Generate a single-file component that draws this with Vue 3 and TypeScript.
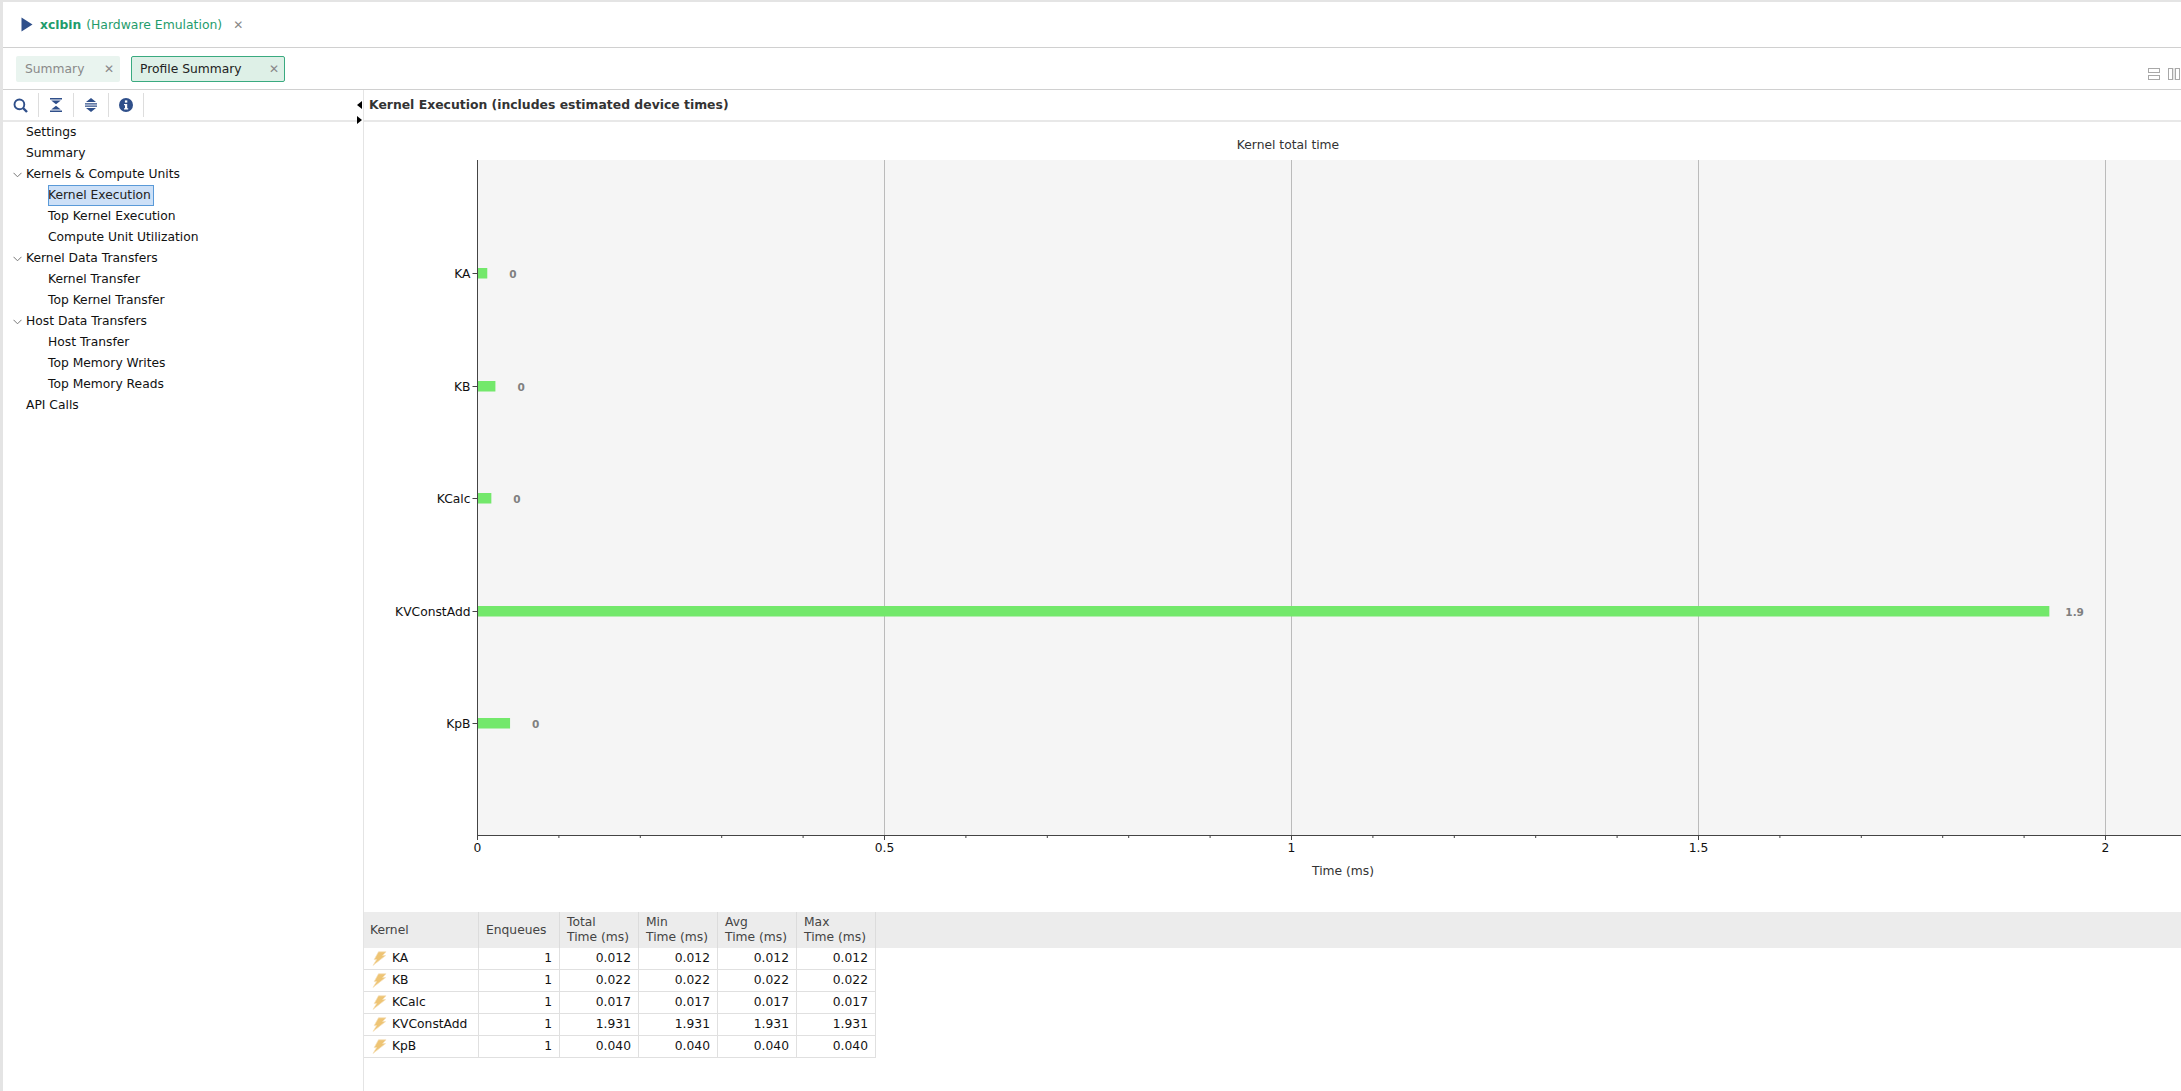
<script setup lang="ts">
interface TreeItem {
  label: string
  level: number
  open?: boolean
  selected?: boolean
}

interface KernelRow {
  name: string
  enqueues: number
  time: number
}

const tree: TreeItem[] = [
  { label: 'Settings', level: 0 },
  { label: 'Summary', level: 0 },
  { label: 'Kernels & Compute Units', level: 0, open: true },
  { label: 'Kernel Execution', level: 1, selected: true },
  { label: 'Top Kernel Execution', level: 1 },
  { label: 'Compute Unit Utilization', level: 1 },
  { label: 'Kernel Data Transfers', level: 0, open: true },
  { label: 'Kernel Transfer', level: 1 },
  { label: 'Top Kernel Transfer', level: 1 },
  { label: 'Host Data Transfers', level: 0, open: true },
  { label: 'Host Transfer', level: 1 },
  { label: 'Top Memory Writes', level: 1 },
  { label: 'Top Memory Reads', level: 1 },
  { label: 'API Calls', level: 0 },
]

const kernels: KernelRow[] = [
  { name: 'KA', enqueues: 1, time: 0.012 },
  { name: 'KB', enqueues: 1, time: 0.022 },
  { name: 'KCalc', enqueues: 1, time: 0.017 },
  { name: 'KVConstAdd', enqueues: 1, time: 1.931 },
  { name: 'KpB', enqueues: 1, time: 0.04 },
]

// chart geometry, svg origin is the left edge of the right pane
const axisX = 113.5
const pxPerMs = 814
const plotTop = 38
const plotBottom = 713
const rowStep = 112.5

const majors = [0, 0.5, 1, 1.5, 2]
const minors = Array.from({ length: 25 }, (_, i) => i * 0.1).filter((v) => Math.round(v * 10) % 5 !== 0)

function tickX(ms: number) {
  return axisX + ms * pxPerMs
}

function barY(i: number) {
  return Math.round(plotTop + rowStep * (i + 1) - 4.5)
}

function shortValue(ms: number) {
  return ms < 1 ? '0' : ms.toFixed(1)
}

function labelX(ms: number) {
  return tickX(ms) + (ms < 1 ? 22 : 16)
}
</script>

<template>
  <div class="window">
    <header class="title-bar">
      <svg class="play" width="12" height="15" viewBox="0 0 12 15">
        <path d="M0.5 0.5 L11.5 7.5 L0.5 14.5 Z" fill="#2f4f8a" />
      </svg>
      <span class="title-name">xclbin</span>
      <span class="title-mode">(Hardware Emulation)</span>
      <span class="title-close">✕</span>
    </header>

    <div class="tab-bar">
      <div class="tab tab-off">
        <span>Summary</span>
        <span class="tab-close">✕</span>
      </div>
      <div class="tab tab-on">
        <span>Profile Summary</span>
        <span class="tab-close">✕</span>
      </div>
      <div class="layout-icons">
        <svg width="12" height="12" viewBox="0 0 12 12">
          <rect x="0.5" y="0.5" width="11" height="4" fill="none" stroke="#a8a8a8" />
          <rect x="0.5" y="7.5" width="11" height="4" fill="none" stroke="#a8a8a8" />
        </svg>
        <svg width="12" height="12" viewBox="0 0 12 12">
          <rect x="5" y="0" width="2" height="12" fill="#e6e6e6" />
          <rect x="0.5" y="0.5" width="4" height="11" fill="none" stroke="#a8a8a8" />
          <rect x="7.5" y="0.5" width="4" height="11" fill="none" stroke="#a8a8a8" />
        </svg>
      </div>
    </div>

    <div class="main">
      <aside class="side">
        <div class="toolbar">
          <button class="tool">
            <svg width="15" height="15" viewBox="0 0 15 15">
              <circle cx="6.4" cy="6.4" r="4.9" fill="none" stroke="#2f4f8a" stroke-width="1.9" />
              <path d="M10 10 L14 14" stroke="#2f4f8a" stroke-width="2.4" />
            </svg>
          </button>
          <button class="tool">
            <svg width="12" height="14" viewBox="0 0 12 14">
              <path d="M0 0 H12 V1.5 H0 Z M1.2 2.6 H10.8 L6 6.2 Z M6 7.8 L10.8 11.4 H1.2 Z M0 12.5 H12 V14 H0 Z" fill="#2f4f8a" />
            </svg>
          </button>
          <button class="tool">
            <svg width="12" height="14" viewBox="0 0 12 14">
              <path d="M6 0 L11 4 H1 Z M0 5.2 H12 V6.4 H0 Z M0 7.6 H12 V8.8 H0 Z M1 10 H11 L6 14 Z" fill="#2f4f8a" />
            </svg>
          </button>
          <button class="tool">
            <svg width="14" height="14" viewBox="0 0 14 14">
              <circle cx="7" cy="7" r="7" fill="#2f4f8a" />
              <rect x="5.9" y="2.4" width="2.4" height="2.2" fill="#fff" />
              <path d="M5 6 H8.2 V10.3 H9.2 V11.6 H5 V10.3 H6 V7.3 H5 Z" fill="#fff" />
            </svg>
          </button>
        </div>
        <ul class="tree">
          <li v-for="item in tree" :key="item.label" :class="['tree-row', item.level ? 'child' : 'parent']">
            <svg v-if="item.open" class="chevron" width="9" height="6" viewBox="0 0 9 6">
              <path d="M0.5 0.8 L4.5 4.8 L8.5 0.8" fill="none" stroke="#777" stroke-width="1" />
            </svg>
            <span :class="['tree-label', { selected: item.selected }]">{{ item.label }}</span>
          </li>
        </ul>
      </aside>

      <div class="sash">
        <span class="sash-left"></span>
        <span class="sash-right"></span>
      </div>

      <section class="pane">
        <div class="pane-title">Kernel Execution (includes estimated device times)</div>
        <svg class="chart" width="1817" height="790" viewBox="0 0 1817 790">
          <text class="chart-title" x="924" y="27" text-anchor="middle">Kernel total time</text>
          <rect :x="axisX" :y="plotTop" width="1704" :height="plotBottom - plotTop" fill="#f5f5f5" />
          <line
            v-for="m in majors.slice(1)"
            :key="m"
            :x1="tickX(m)"
            :x2="tickX(m)"
            :y1="plotTop"
            :y2="plotBottom"
            stroke="#bbb"
          />
          <g v-for="(k, i) in kernels" :key="k.name">
            <line :x1="axisX - 5" :x2="axisX" :y1="barY(i) + 5.5" :y2="barY(i) + 5.5" stroke="#444" />
            <text class="cat" :x="axisX - 7" :y="barY(i) + 10" text-anchor="end">{{ k.name }}</text>
            <rect :x="axisX" :y="barY(i)" :width="k.time * pxPerMs" height="10.5" fill="#73e86b" />
            <text class="bar-value" :x="labelX(k.time)" :y="barY(i) + 10">{{ shortValue(k.time) }}</text>
          </g>
          <line :x1="axisX" :x2="axisX" :y1="plotTop" :y2="plotBottom + 5" stroke="#444" />
          <line :x1="axisX" x2="1817" :y1="plotBottom + 0.5" :y2="plotBottom + 0.5" stroke="#444" />
          <line
            v-for="m in minors"
            :key="m"
            :x1="tickX(m)"
            :x2="tickX(m)"
            :y1="plotBottom"
            :y2="plotBottom + 3"
            stroke="#444"
          />
          <g v-for="m in majors" :key="'t' + m">
            <line :x1="tickX(m)" :x2="tickX(m)" :y1="plotBottom" :y2="plotBottom + 5" stroke="#444" />
            <text class="cat" :x="tickX(m)" :y="plotBottom + 17" text-anchor="middle">{{ m }}</text>
          </g>
          <text class="chart-title" x="979" y="753" text-anchor="middle">Time (ms)</text>
        </svg>

        <div class="table-wrap">
          <table class="grid">
            <thead>
              <tr>
                <th class="c-name">Kernel</th>
                <th class="c-enq">Enqueues</th>
                <th class="c-num">Total<br />Time (ms)</th>
                <th class="c-num">Min<br />Time (ms)</th>
                <th class="c-num">Avg<br />Time (ms)</th>
                <th class="c-num">Max<br />Time (ms)</th>
              </tr>
            </thead>
            <tbody>
              <tr v-for="k in kernels" :key="k.name">
                <td class="name-cell">
                  <span class="name-inner">
                    <svg width="15" height="15" viewBox="0 0 15 15">
                      <path d="M6.5 0.8 H14 L10.6 4.6 H13.6 L1 14.4 L4.6 8.6 H2.2 Z" fill="#eec474" stroke="#f5e0b8" stroke-width="0.7" />
                    </svg>
                    <span>{{ k.name }}</span>
                  </span>
                </td>
                <td class="num">{{ k.enqueues }}</td>
                <td v-for="n in 4" :key="n" class="num">{{ k.time.toFixed(3) }}</td>
              </tr>
            </tbody>
          </table>
        </div>
      </section>
    </div>
  </div>
</template>

<style>
html, body {
  margin: 0;
  background: #fff;
  overflow: hidden;
}
</style>

<style scoped>
.window {
  width: 2181px;
  height: 1091px;
  box-sizing: border-box;
  border-top: 2px solid #e4e4e4;
  border-left: 3px solid #e4e4e4;
  display: flex;
  flex-direction: column;
  overflow: hidden;
  font-family: "DejaVu Sans", sans-serif;
  font-size: 12.3px;
  color: #111;
  background: #fff;
}

.title-bar {
  height: 46px;
  flex: none;
  box-sizing: border-box;
  border-bottom: 1px solid #d0d0d0;
  display: flex;
  align-items: center;
  padding-left: 18px;
  color: #1f9c6c;
}
.play { margin-right: 7px; }
.title-name { font-weight: 700; margin-right: 5px; }
.title-mode { font-size: 12.4px; }
.title-close { color: #888; margin-left: 11px; font-size: 12px; }

.tab-bar {
  height: 42px;
  flex: none;
  box-sizing: border-box;
  border-bottom: 1px solid #d0d0d0;
  display: flex;
  align-items: flex-start;
  gap: 11px;
  padding: 8px 1px 0 13px;
}
.tab {
  height: 26px;
  box-sizing: border-box;
  border-radius: 2px;
  display: flex;
  align-items: center;
  justify-content: space-between;
}
.tab-off { width: 104px; background: #e9f4ef; color: #8a8a8a; padding: 0 6px 0 9px; }
.tab-on { width: 154px; background: #def0e7; border: 1px solid #3aaa80; color: #222; padding: 0 5px 0 8px; }
.tab-close { color: #888; font-size: 12px; }
.layout-icons {
  margin-left: auto;
  margin-top: 12px;
  display: flex;
  gap: 8px;
}

.main {
  flex: 1;
  display: flex;
  min-height: 0;
}

.side {
  width: 354px;
  flex: none;
}
.toolbar {
  height: 32px;
  box-sizing: border-box;
  border-bottom: 2px solid #e8e8e8;
  display: flex;
  align-items: center;
}
.tool {
  width: 35px;
  height: 24px;
  padding: 0;
  border: 0;
  border-right: 1px solid #ddd;
  background: none;
  display: flex;
  align-items: center;
  justify-content: center;
}
.tool:first-child { width: 36px; }

.tree {
  list-style: none;
  margin: 0;
  padding: 0;
}
.tree-row {
  height: 21px;
  display: flex;
  align-items: center;
  position: relative;
}
.parent { padding-left: 23px; }
.child { padding-left: 45px; }
.chevron { position: absolute; left: 10px; top: 8px; }
.tree-label { line-height: 21px; color: #111; }
.tree-label.selected {
  background: #cde0f7;
  outline: 1px solid #5a9ad8;
  outline-offset: -1px;
  color: #222;
  padding-right: 3px;
}

.sash {
  width: 6px;
  flex: none;
  position: relative;
}
.sash-left, .sash-right {
  position: absolute;
  left: 0;
  width: 0;
  height: 0;
  border-top: 4.5px solid transparent;
  border-bottom: 4.5px solid transparent;
}
.sash-left { top: 10.5px; border-right: 5px solid #000; }
.sash-right { top: 25.5px; border-left: 5px solid #000; }

.pane {
  flex: 1;
  min-width: 0;
  border-left: 1px solid #e4e4e4;
}
.pane-title {
  height: 32px;
  box-sizing: border-box;
  border-bottom: 2px solid #e8e8e8;
  padding-left: 5px;
  line-height: 30px;
  font-size: 12.4px;
  font-weight: 700;
  color: #333;
}
.chart { display: block; }
.chart-title { font-size: 12.3px; fill: #333; }
.cat { font-size: 12.3px; fill: #111; }
.bar-value { font-size: 10.5px; font-weight: 700; fill: #808080; }

.table-wrap {
  background: linear-gradient(#ececec, #ececec) top / 100% 36px no-repeat;
}
.grid {
  border-collapse: separate;
  border-spacing: 0;
  table-layout: fixed;
  width: 512px;
}
.grid th {
  height: 36px;
  box-sizing: border-box;
  padding: 0 0 0 7px;
  background: #ececec;
  border-right: 1px solid #dcdcdc;
  font-weight: 400;
  text-align: left;
  color: #444;
  line-height: 15px;
}
.grid th.c-name { padding-left: 6px; }
.c-name { width: 115px; }
.c-enq { width: 81px; }
.c-num { width: 79px; }
.grid td {
  height: 22px;
  box-sizing: border-box;
  padding: 0 7px 1px 0;
  border-right: 1px solid #e0e0e0;
  border-bottom: 1px solid #e0e0e0;
  color: #111;
}
.num { text-align: right; }
.grid td.name-cell { padding: 0 0 1px 8px; }
.name-inner {
  display: flex;
  align-items: center;
  gap: 5px;
}
</style>
